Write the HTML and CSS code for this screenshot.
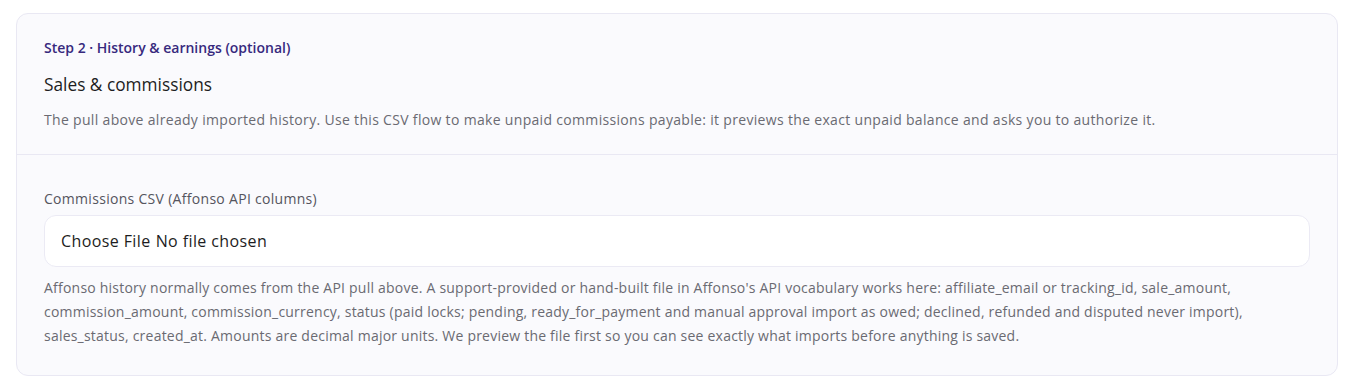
FILE: index.html
```html
<!DOCTYPE html>
<html lang="en">
<head>
<meta charset="utf-8">
<title>Sales &amp; commissions</title>
<link rel="stylesheet" href="styles.css">
</head>
<body>
<main class="page">
  <section class="card">
    <header class="card-head">
      <p class="step">Step 2 · History &amp; earnings (optional)</p>
      <h2 class="title">Sales &amp; commissions</h2>
      <p class="desc">The pull above already imported history. Use this CSV flow to make unpaid commissions payable: it previews the exact unpaid balance and asks you to authorize it.</p>
    </header>
    <div class="card-body">
      <label class="field-label" for="csv">Commissions CSV (Affonso API columns)</label>
      <div class="file-box">
        <input class="file-input" id="csv" type="file" accept=".csv">
      </div>
      <p class="help">Affonso history normally comes from the API pull above. A support-provided or hand-built file in Affonso's API vocabulary works here: affiliate_email or tracking_id, sale_amount, commission_amount, commission_currency, status (paid locks; pending, ready_for_payment and manual approval import as owed; declined, refunded and disputed never import), sales_status, created_at. Amounts are decimal major units. We preview the file first so you can see exactly what imports before anything is saved.</p>
    </div>
  </section>
</main>
</body>
</html>
```
FILE: styles.css
```css
* { box-sizing: border-box; }
html, body { margin: 0; padding: 0; background: #ffffff; }
body {
  font-family: "Open Sans", "Noto Sans", sans-serif;
  color: #1f1f24;
}
.page { padding: 13px 12px 0 16px; }
.card {
  background: #fafafd;
  border: 1px solid #e9e8f3;
  border-radius: 12px;
  overflow: hidden;
}
.card-head {
  padding: 24px 27px 23px;
  border-bottom: 1px solid #e9e8f3;
}
.step {
  margin: 0;
  font-size: 14px;
  line-height: 20px;
  font-weight: 600;
  color: #37297d;
}
.title {
  margin: 14px 0 0;
  font-size: 17.3px;
  line-height: 26px;
  font-weight: 500;
  color: #1d1d22;
}
.desc {
  margin: 11px 0 0;
  font-size: 14px;
  line-height: 22px;
  letter-spacing: 0.32px;
  color: #6a6a72;
}
.card-body {
  padding: 34px 27px 27px;
}
.field-label {
  display: block;
  font-size: 14px;
  line-height: 20px;
  font-weight: 500;
  letter-spacing: 0.3px;
  color: #55555d;
}
.file-box {
  margin-top: 6px;
  background: #ffffff;
  border: 1px solid #ebeaf4;
  border-radius: 12px;
  height: 52px;
  display: flex;
  align-items: center;
  padding: 0 16px;
}
.file-input {
  font-family: inherit;
  font-size: 16px;
  letter-spacing: 0.4px;
  color: #1d1d22;
}
.file-input::file-selector-button {
  font-family: inherit;
  font-size: 16px;
  font-weight: 500;
  letter-spacing: 0.4px;
  color: #1d1d22;
  background: none;
  border: 0;
  padding: 0;
  margin-right: 5px;
}
.help {
  margin: 9px 0 0;
  font-size: 14px;
  line-height: 24px;
  letter-spacing: 0.22px;
  color: #6a6a72;
}
```
